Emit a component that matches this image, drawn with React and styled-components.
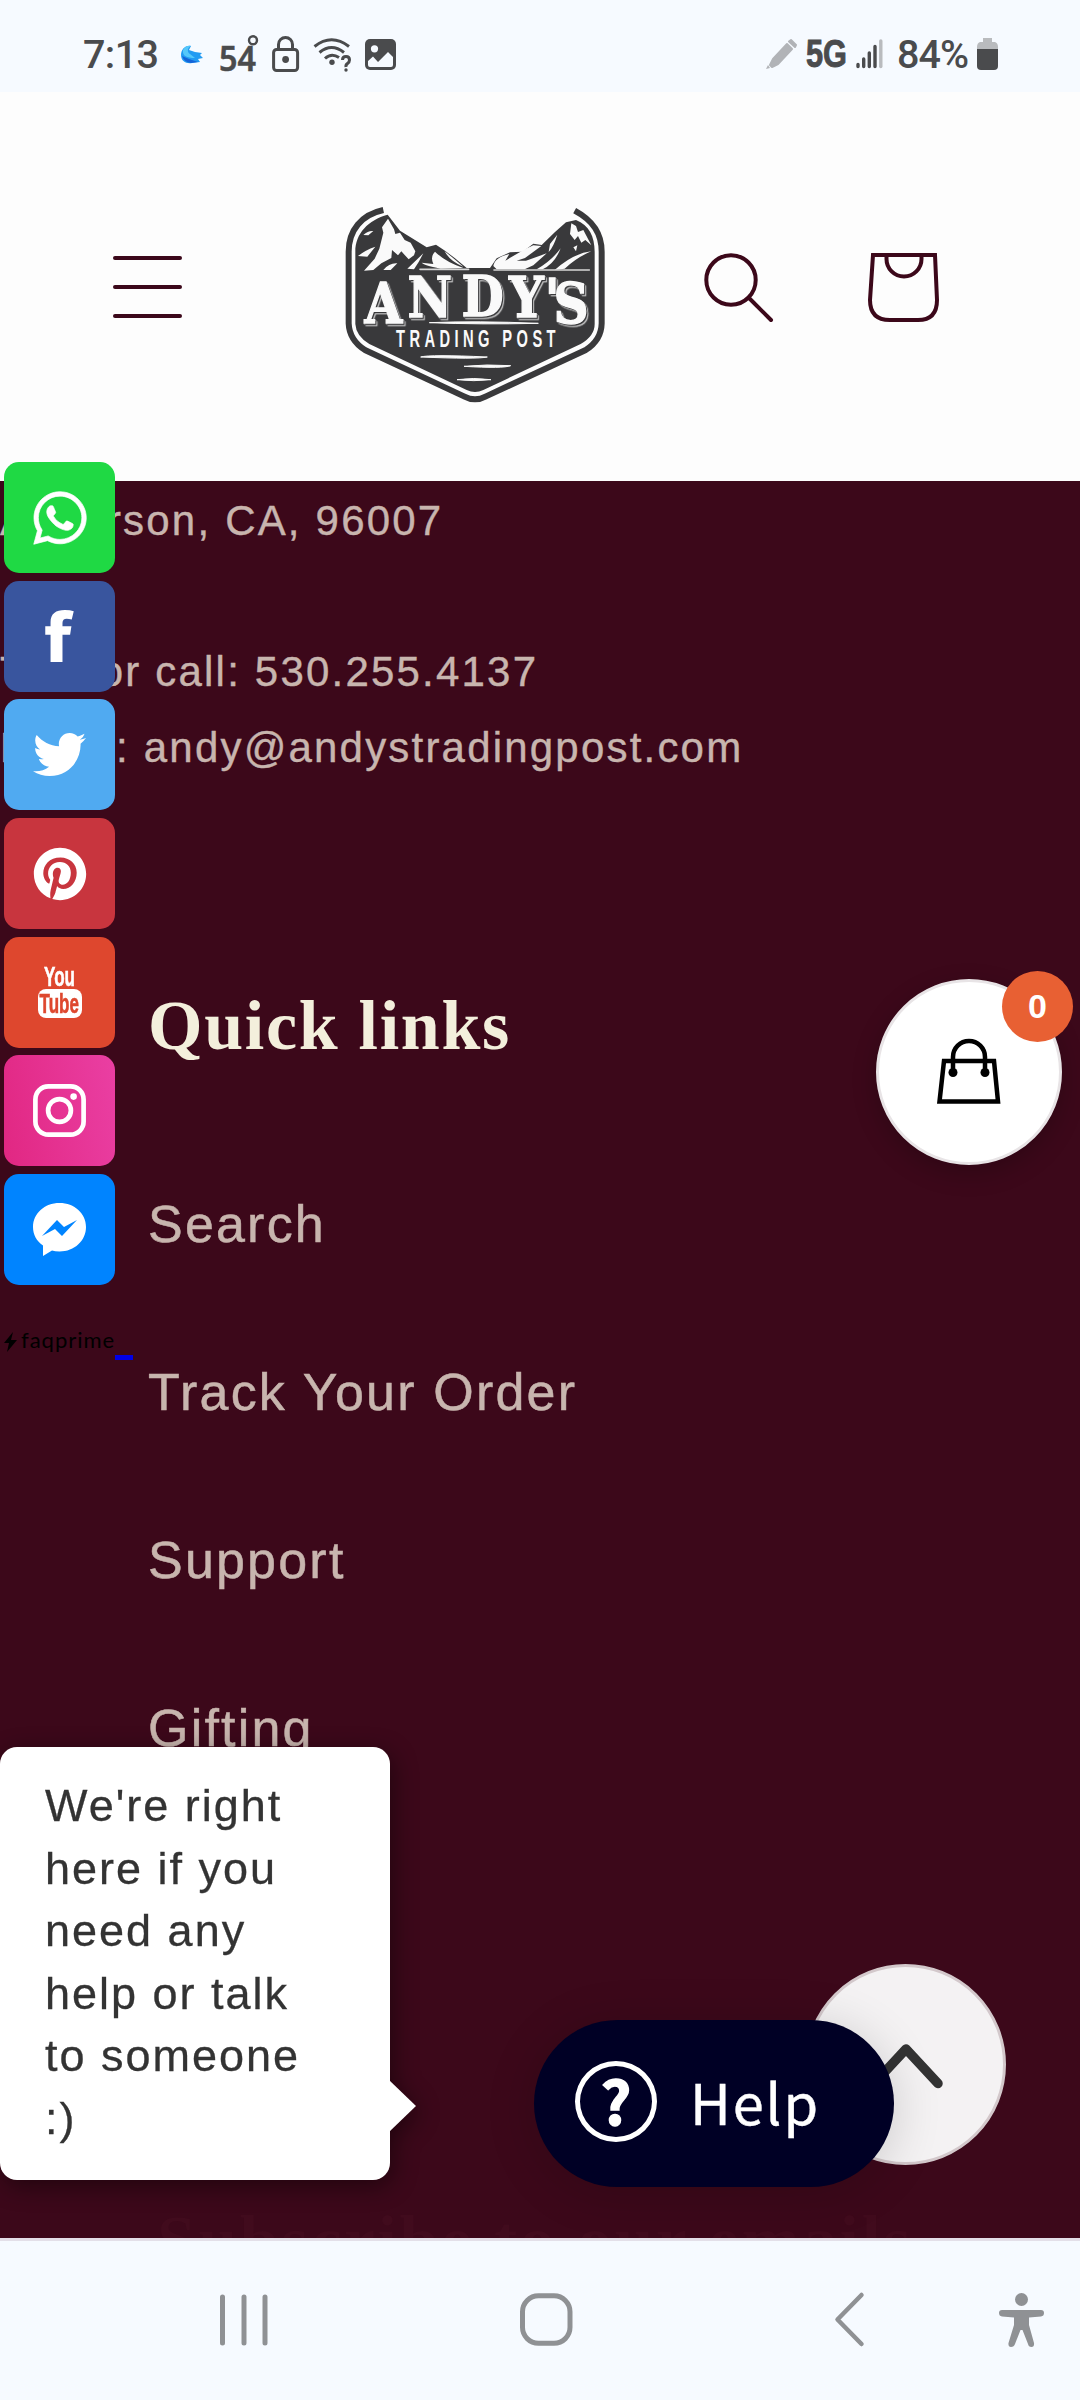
import React from "react";
import styled, { createGlobalStyle } from "styled-components";
import { FaWhatsapp, FaTwitter, FaPinterest } from "react-icons/fa";

const GlobalStyle = createGlobalStyle`
  body { margin: 0; background: #3c081a; }
  *, *::before, *::after { box-sizing: border-box; }
  svg { display: block; flex: none; overflow: visible; }
`;

const sans = `"Liberation Sans", Arial, sans-serif`;
const serif = `"Liberation Serif", "Times New Roman", serif`;

const Screen = styled.div`
  position: relative;
  display: flex;
  flex-direction: column;
  width: 1080px;
  height: 2400px;
  overflow: hidden;
  background: #3c081a;
  font-family: ${sans};
`;

/* ---------- status bar ---------- */

const StatusBar = styled.div`
  display: flex;
  justify-content: space-between;
  align-items: flex-start;
  height: 92px;
  padding: 35px 82px 0 83px;
  background: #f6faff;
  color: #4a4b4d;
  font-family: Roboto, sans-serif;
`;

const StatusGroup = styled.div`
  display: flex;
  align-items: flex-start;
  height: 40px;
  gap: ${(p) => p.$gap}px;
`;

const StatusText = styled.span`
  width: ${(p) => p.$w}px;
  font-size: 39.5px;
  font-weight: 500;
  line-height: 40px;
  letter-spacing: ${(p) => p.$ls || 0}px;
  white-space: nowrap;
`;

/* ---------- store header ---------- */

const Header = styled.header`
  display: flex;
  align-items: flex-start;
  height: 389px;
  padding: 98px 100px 0 113px;
  background: #fdfdfd;
`;

const MenuButton = styled.div`
  display: flex;
  flex-direction: column;
  justify-content: space-between;
  width: 69px;
  height: 62px;
  margin-top: 66px;
  i { height: 4px; border-radius: 2px; background: #3c081a; }
`;

const LogoBox = styled.div`
  margin-left: 138px;
`;

const HeaderIcons = styled.div`
  display: flex;
  gap: 95px;
  margin: 60px 0 0 74px;
`;

/* ---------- footer content ---------- */

const Footer = styled.main`
  flex: 1;
  min-height: 0;
  overflow: hidden;
  background: #3c081a;
`;

const Address = styled.div`
  padding-top: 2px;
  color: #c8b5ae;
  font-size: 42px;
  line-height: 75.6px;
  -webkit-text-stroke: 0.4px #c8b5ae;
`;

const Line = styled.p`
  margin: 0;
  height: 75.6px;
  white-space: nowrap;
  letter-spacing: ${(p) => p.$ls}px;
`;

const Links = styled.section`
  padding: 196px 0 0 148px;
`;

const Heading = styled.h2`
  margin: 0;
  color: #f3efdc;
  font: 700 70px/90px ${serif};
  letter-spacing: ${(p) => p.$ls}px;
  white-space: nowrap;
`;

const LinkList = styled.ul`
  margin: 69px 0 0;
  padding: 0;
  list-style: none;
`;

const LinkItem = styled.li`
  height: 168px;
  color: #c8b5ae;
  font-size: 52px;
  line-height: 168px;
  letter-spacing: 2.2px;
  -webkit-text-stroke: 0.5px #c8b5ae;
`;

const Subscribe = styled(Heading)`
  margin: 384px 0 0 9px;
  color: #410b1d;
`;

/* ---------- floating widgets ---------- */

const SocialRail = styled.aside`
  position: absolute;
  left: 4px;
  top: 462px;
  display: flex;
  flex-direction: column;
  gap: 7.7px;
`;

const SocialButton = styled.div`
  display: flex;
  align-items: center;
  justify-content: center;
  width: 111px;
  height: 111px;
  border-radius: 15px;
  background: ${(p) => p.$bg};
  color: #fff;
`;

const YouTubeMark = styled.div`
  display: flex;
  flex-direction: column;
  align-items: center;
  font: 700 27px/23px ${sans};
  span { transform: scaleX(0.63); -webkit-text-stroke: 0.6px; }
`;

const TubeBox = styled.div`
  display: flex;
  justify-content: center;
  width: 44px;
  height: 29px;
  border-radius: 8px;
  background: #fff;
  color: #de472e;
  line-height: 30px;
`;

const Brand = styled.div`
  display: flex;
  align-items: center;
  width: 129px;
  height: 24px;
  margin-top: 37px;
  color: #000;
  font: 400 22px/24px Lato, sans-serif;
`;

const BrandName = styled.span`
  width: 94px;
  margin-left: 4px;
  letter-spacing: 1px;
  line-height: 22px;
  margin-top: -4px;
`;

const BrandRule = styled.i`
  flex: none;
  width: 18px;
  height: 5px;
  margin-top: 31px;
  background: #0000e6;
`;

const CartButton = styled.div`
  position: absolute;
  left: 876px;
  top: 979px;
  display: flex;
  align-items: center;
  justify-content: center;
  width: 186px;
  height: 186px;
  border: 3px solid #e8e4e6;
  border-radius: 50%;
  background: #fff;
  box-shadow: 0 8px 24px rgba(0, 0, 0, 0.22);
`;

const CartBadge = styled.span`
  position: absolute;
  right: -14px;
  top: -11px;
  width: 71px;
  height: 71px;
  border-radius: 50%;
  background: #e86033;
  color: #fff;
  font: 700 34px/70px ${sans};
  text-align: center;
`;

const ChatBubble = styled.div`
  position: absolute;
  left: 0;
  top: 1747px;
  width: 390px;
  height: 433px;
  padding: 28px 50px 0 45px;
  border-radius: 17px;
  background: #fff;
  color: #333;
  font-size: 45px;
  line-height: 62.5px;
  letter-spacing: 2px;
  -webkit-text-stroke: 0.3px #333;
  filter: drop-shadow(3px 6px 12px rgba(0, 0, 0, 0.45));
  &::after {
    content: "";
    position: absolute;
    left: 389px;
    top: 333px;
    border: 26px solid transparent;
    border-left: 27px solid #fff;
    border-right: 0;
  }
`;

const TopButton = styled.div`
  position: absolute;
  left: 805px;
  top: 1964px;
  display: flex;
  align-items: center;
  justify-content: center;
  width: 201px;
  height: 201px;
  border: 3px solid #d3c8cb;
  border-radius: 50%;
  background: #f4f2f3;
`;

const HelpButton = styled.div`
  position: absolute;
  left: 534px;
  top: 2020px;
  display: flex;
  align-items: center;
  width: 360px;
  height: 167px;
  padding-left: 41px;
  border-radius: 84px;
  background: #000025;
  color: #fff;
  box-shadow: 0 6px 50px rgba(0, 0, 0, 0.16);
`;

const HelpMark = styled.span`
  width: 82px;
  height: 81px;
  margin-top: -4px;
  border: 5.5px solid #fff;
  border-radius: 50%;
  font: 700 60px/65px "Noto Sans CJK JP", "Noto Sans", sans-serif;
  text-align: center;
  -webkit-text-stroke: 1.5px #fff;
`;

const HelpLabel = styled.span`
  margin: -6px 0 0 33px;
  font: 400 56px/80px "Noto Sans CJK JP", "Noto Sans", sans-serif;
  letter-spacing: 1.9px;
  -webkit-text-stroke: 0.4px #fff;
`;

/* ---------- system navigation ---------- */

const NavBar = styled.nav`
  display: flex;
  align-items: flex-start;
  height: 162px;
  padding: 52px 36px 0 219px;
  border-top: 3px solid #e3dfe8;
  background: #f6faff;
`;

const NavItem = styled.div`
  margin-left: ${(p) => p.$ml || 0}px;
`;

function Logo() {
  const ink = "#39393b";
  const snow = "#fafafa";
  return (
    <svg width="310" height="230" viewBox="0 0 930 690">
      <path d="M190 60C125 74 86 120 86 185V400Q88 450 135 480L432 619Q465 637 498 619L797 480Q844 450 845 400V185C845 130 820 92 764 62" fill="none" stroke={ink} strokeWidth="18" />
      <path d="M203 74C145 90 106 130 106 185V402Q108 438 148 462L440 600Q465 612 490 600L782 462Q824 438 824 402V185C824 140 807 105 768 90L738 97L705 126L665 165L640 161L608 185L570 187L530 205L510 234L440 234L405 205L375 182L348 164L320 172L285 150L240 122Z" fill={ink} />
      <path d="M204 86L222 118L226 132L240 128L254 150L272 158L286 184L282 196L266 208L244 184L234 196L216 180L214 204L184 220L160 240L132 242L164 206L178 176L190 128L186 112Z" fill={snow} />
      <path d="M114 198Q136 180 166 170L142 200ZM130 135Q145 121 160 123L145 136ZM190 240Q208 218 232 220L212 240ZM262 236L310 190L296 216L282 238ZM345 185Q375 215 430 234L362 236Q310 225 305 218L340 222Q330 200 345 185ZM374 184Q395 200 430 230Q390 214 374 184ZM520 228Q524 202 568 192L556 212L590 192Q612 178 640 166L664 168L615 204L590 212L618 212L680 190L640 226L614 238L530 238ZM690 162L712 134Q700 172 686 186ZM722 175Q705 220 668 238L650 238Q695 212 722 175ZM754 100L768 108L774 126L790 120L814 166L796 150L784 158L774 138L764 150L750 132ZM760 172L772 166L768 184ZM704 240Q760 190 814 184Q770 202 734 236Z" fill={snow} />
      <path d="M300 238H446M522 240H808" stroke="#d8d8d8" strokeWidth="5" strokeLinecap="round" />
      <g transform="scale(0.88 1)">
        <text x="152 298 482 644 766 796" y="400 381 379 382 386 398" fill={snow} stroke={snow} strokeWidth="4" fontFamily="DejaVu Serif, serif" fontWeight="700" fontSize="166" style={{ filter: "drop-shadow(4px 4px 0 #39393b) drop-shadow(3px 3px 0 #ddd)" }}>ANDY'S</text>
      </g>
      <path d="M328 398Q470 392 655 400Q480 404 328 398ZM302 501Q330 493 502 501Q470 508 302 501ZM432 529Q500 522 572 527Q550 536 432 529ZM411 569Q460 562 513 569Q460 575 411 569Z" fill={snow} stroke={snow} strokeWidth="3" />
      <text x="228" y="471" fill={snow} fontFamily="Liberation Sans Narrow, Liberation Sans, sans-serif" fontWeight="700" fontSize="73" letterSpacing="22" textLength="492" lengthAdjust="spacingAndGlyphs">TRADING POST</text>
    </svg>
  );
}

export default function App() {
  return (
    <>
      <GlobalStyle />
      <Screen>
        <StatusBar>
          <StatusGroup $gap={14}>
            <StatusText $w={84} $ls={-0.6}>7:13</StatusText>
            <svg width="22" height="40" viewBox="0 1 22 40">
              <path d="M10 12C4 11 0 16 0 21C0 27 5 30 11 29L19 28L17 25L22 24L19 21L21 19L14 18L8 16Z" fill="#229bf2" />
              <path d="M10 12C6 14 6 18 9 20L14 24C6 24 1 22 2 16Q5 11 10 12Z" fill="#54c7fa" />
              <path d="M1 22L8 25L17 28L10 29Q3 28 1 22Z" fill="#1463d8" />
            </svg>
            <svg width="41" height="40" viewBox="0 1 41 40">
              <text x="2" y="37" fill="#4a4b4d" stroke="#4a4b4d" strokeWidth="0.5" fontFamily="Noto Sans, sans-serif" fontWeight="600" fontSize="34" textLength="37" lengthAdjust="spacingAndGlyphs">54</text>
              <circle cx="36" cy="6.3" r="4" fill="none" stroke="#4a4b4d" strokeWidth="2.4" />
            </svg>
            <svg width="27" height="40" viewBox="0 1 27 40" fill="none" stroke="#4a4b4d" strokeWidth="3">
              <rect x="1.6" y="15.5" width="24" height="21" rx="3" />
              <path d="M6.5 15V10.5A7 7 0 0 1 20.5 10.5V15" />
              <circle cx="13.6" cy="25.5" r="3.4" fill="#4a4b4d" stroke="none" />
            </svg>
            <svg width="38" height="40" viewBox="0 1 38 40" fill="none" stroke="#4a4b4d" strokeWidth="3">
              <path d="M1.5 12.5Q18.5 -1 36 12.5M6.5 18.5Q18.5 8.5 31 18.5M12 24.5Q18.5 18.5 26 23.5" />
              <circle cx="19" cy="28.3" r="2.7" fill="#4a4b4d" stroke="none" />
              <path d="M29.5 26Q29.5 22.5 33 22.5T36.5 26Q36.5 28 34.5 29.5T33 33" />
              <circle cx="33" cy="36" r="1.7" fill="#4a4b4d" stroke="none" />
            </svg>
            <svg width="31" height="40" viewBox="0 1 31 40">
              <rect y="5" width="31" height="31" rx="5" fill="#4a4b4d" />
              <path d="M3 27L8 22.5L13 28L23 18L28 23V31Q28 33 26 33H5Q3 33 3 31Z" fill="#f6faff" />
              <circle cx="9.5" cy="14.8" r="3.6" fill="#f6faff" />
            </svg>
          </StatusGroup>
          <StatusGroup $gap={9}>
            <svg width="31" height="40" viewBox="0 1 31 40" fill="#b1b3b7">
              <path d="M21 10L26 15L12 30L6 33L4 31L7 25ZM23 7.5L25 6L30 11L29 13Z" stroke="#b1b3b7" strokeWidth="2" strokeLinejoin="round" />
              <path d="M2 31L4 34L0 35Z" />
            </svg>
            <svg width="41" height="40" viewBox="0 1 41 40">
              <text x="0" y="33" fill="#4a4b4d" stroke="#4a4b4d" strokeWidth="0.9" fontFamily="Liberation Sans, sans-serif" fontWeight="700" fontSize="38.5" textLength="41" lengthAdjust="spacingAndGlyphs">5G</text>
            </svg>
            <svg width="32" height="40" viewBox="0 1 32 40" stroke="#4a4b4d" strokeWidth="3.4" strokeLinecap="round">
              <path d="M2 30.5V32.5M7.7 25V32.5M13.3 19V32.5M19 12.5V32.5" />
              <path d="M24.8 7V32.5" stroke="#b9bbbe" />
            </svg>
            <StatusText $w={71} $ls={-1}>84%</StatusText>
            <svg width="21" height="40" viewBox="0 1 21 40">
              <path d="M6 4H15V8H18Q21 9 21 13V16H0V13Q0 9 3 8H6Z" fill="#b9bbbe" />
              <path d="M0 15H21V32Q21 36 17 36H4Q0 36 0 32Z" fill="#4a4b4d" />
            </svg>
          </StatusGroup>
        </StatusBar>

        <Header>
          <MenuButton><i /><i /><i /></MenuButton>
          <LogoBox><Logo /></LogoBox>
          <HeaderIcons>
            <svg width="69" height="73" viewBox="0 0 69 73" fill="none" stroke="#3c081a" strokeWidth="4">
              <circle cx="27" cy="30" r="24.7" />
              <path d="M45 48L67 70" strokeLinecap="round" />
            </svg>
            <svg width="71" height="73" viewBox="0 0 71 73" fill="none" stroke="#3c081a" strokeWidth="4">
              <path d="M5 5H67L69 50Q69 70 50 70H22Q2 70 2 50Z" />
              <path d="M18.5 5V9A17.5 17.5 0 0 0 53.5 9V5" />
            </svg>
          </HeaderIcons>
        </Header>

        <Footer>
          <Address>
            <Line $ls={2.2}>Anderson, CA, 96007</Line>
            <Line />
            <Line $ls={2.2}>Text or call: 530.255.4137</Line>
            <Line $ls={2.2}>Email: andy@andystradingpost.com</Line>
          </Address>
          <Links>
            <Heading $ls={1.7}>Quick links</Heading>
            <LinkList>
              <LinkItem>Search</LinkItem>
              <LinkItem>Track Your Order</LinkItem>
              <LinkItem>Support</LinkItem>
              <LinkItem>Gifting</LinkItem>
            </LinkList>
            <Subscribe $ls={2.4}>Subscribe to our emails</Subscribe>
          </Links>
        </Footer>

        <NavBar>
          <NavItem>
            <svg width="50" height="54" viewBox="0 0 50 54" stroke="#8f9194" strokeWidth="5" strokeLinecap="round">
              <path d="M3.5 4V50M25 4V50M46 4V50" />
            </svg>
          </NavItem>
          <NavItem $ml={250}>
            <svg width="54" height="54" viewBox="0 0 54 54" fill="none" stroke="#8f9194" strokeWidth="5">
              <rect x="3.5" y="2.8" width="47.5" height="47.5" rx="16" />
            </svg>
          </NavItem>
          <NavItem $ml={262}>
            <svg width="30" height="54" viewBox="0 0 30 54" fill="none" stroke="#8f9194" strokeWidth="4.5" strokeLinecap="round" strokeLinejoin="round">
              <path d="M26.5 2L2.5 26.5L26.5 51" />
            </svg>
          </NavItem>
          <NavItem $ml={134}>
            <svg width="45" height="56" viewBox="0 0 45 56" fill="#8f9194">
              <circle cx="22.5" cy="6.5" r="6.5" />
              <path d="M3 17H42Q45 17 45 20T42 23.5L30 24.5V32L35 50Q35.5 54 32.5 54T29 51L23.5 37H21.5L16 51Q15 54 12 54T9.5 50L15 32V24.5L3 23.5Q0 23 0 20T3 17Z" />
            </svg>
          </NavItem>
        </NavBar>

        <SocialRail>
          <SocialButton $bg="#1fd944"><FaWhatsapp size={60} stroke="#fff" strokeWidth={6} /></SocialButton>
          <SocialButton $bg="#39559e">
            <svg width="29" height="52" viewBox="136 511 86 157" fill="#fff">
              <path d="M152 668V586H136V560H152V548C152 522 168 511 195 511Q212 511 222 515L216 540Q188 531 188 550V560H215L211 586H188V668Z" />
            </svg>
          </SocialButton>
          <SocialButton $bg="#50aaf1"><FaTwitter size={53} /></SocialButton>
          <SocialButton $bg="#c8353e"><FaPinterest size={54} /></SocialButton>
          <SocialButton $bg="#de472e">
            <YouTubeMark><span>You</span><TubeBox><span>Tube</span></TubeBox></YouTubeMark>
          </SocialButton>
          <SocialButton $bg="linear-gradient(80deg, #e12782, #ea3fa3)">
            <svg width="53" height="53" viewBox="0 0 53 53" fill="none" stroke="#fff" strokeWidth="4.7">
              <rect x="2.4" y="2.4" width="48.2" height="48.2" rx="13" />
              <circle cx="26.5" cy="26.5" r="11.4" />
              <circle cx="40.6" cy="12.6" r="3.3" fill="#fff" stroke="none" />
            </svg>
          </SocialButton>
          <SocialButton $bg="#0084ff">
            <svg width="53" height="53" viewBox="0 0 53 53">
              <path d="M26.5 0C41.5 0 53 10.5 53 24S41.5 48.5 26.5 48.5Q22 48.5 19 47.5L10 53V42.5C3.5 38 0 31.5 0 24C0 10.5 11.5 0 26.5 0Z" fill="#fff" />
              <path d="M9 33L24 17L31 24L44 17L29 33L22 26Z" fill="#0084ff" />
            </svg>
          </SocialButton>
          <Brand>
            <svg width="13" height="20" viewBox="0 0 13 20"><path d="M9 0L0 11H5L3 20L13 8H7Z" /></svg>
            <BrandName>faqprime</BrandName>
            <BrandRule />
          </Brand>
        </SocialRail>

        <CartButton>
          <svg width="64" height="66" viewBox="0 0 64 66" fill="none" stroke="#000" strokeWidth="4.5">
            <path d="M7 22H57L61 62.5H2.5Z" />
            <path d="M16 34V18A16 16 0 0 1 48 18V34" />
            <circle cx="16" cy="33.5" r="4.5" fill="#000" stroke="none" />
            <circle cx="48" cy="33.5" r="4.5" fill="#000" stroke="none" />
          </svg>
          <CartBadge>0</CartBadge>
        </CartButton>

        <ChatBubble>We're right here if you need any help or talk to someone :)</ChatBubble>

        <TopButton>
          <svg width="74" height="46" viewBox="0 0 74 46" fill="none" stroke="#333" strokeWidth="9.5" strokeLinecap="round" strokeLinejoin="round">
            <path d="M5 41.5L37 7L69 41.5" />
          </svg>
        </TopButton>

        <HelpButton>
          <HelpMark>?</HelpMark>
          <HelpLabel>Help</HelpLabel>
        </HelpButton>
      </Screen>
    </>
  );
}
